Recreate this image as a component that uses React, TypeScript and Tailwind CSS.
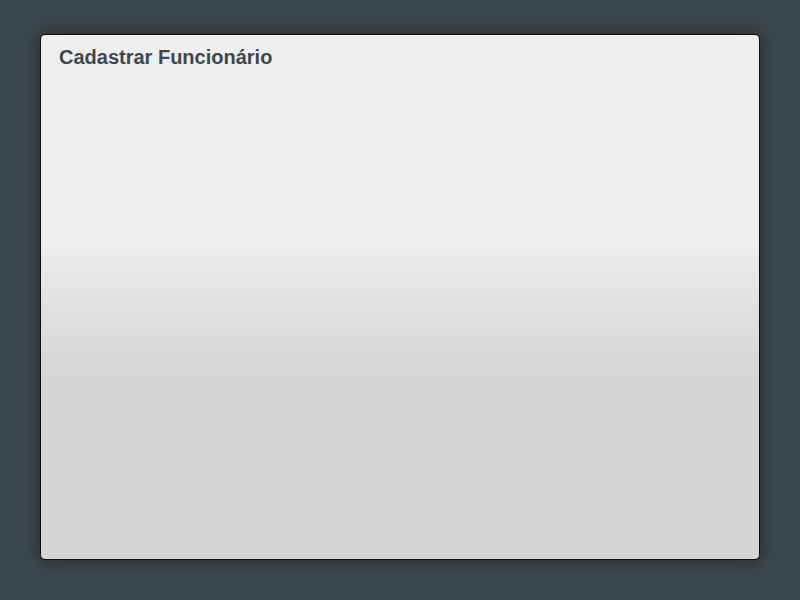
import React from 'react'

export default function App() {
  return (
    <div className="w-[800px] h-[600px] bg-[#3b474e] pt-[34px] px-[40px] font-['Liberation_Sans',Arial,sans-serif]">
      <div className="h-[526px] rounded-[5px] border border-[#0d1012] bg-[linear-gradient(to_bottom,#eeeeee_0%,#eeeeee_39%,#d9d9d9_60%,#d4d4d4_68%,#d4d4d4_100%)] shadow-[0_0_18px_rgba(0,0,0,0.45)] px-[18px] pt-[9px]">
        <h1 className="text-[20px] leading-[26px] font-bold text-[#3d494f]">Cadastrar Funcionário</h1>
      </div>
    </div>
  )
}
